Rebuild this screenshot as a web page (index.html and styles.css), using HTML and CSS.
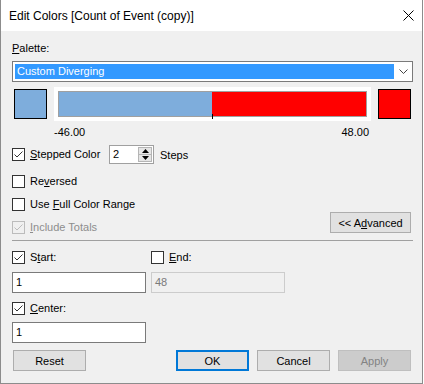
FILE: index.html
```html
<!DOCTYPE html>
<html lang="en">
<head>
	<meta charset="UTF-8">
	<title>Edit Colors</title>
	<link rel="stylesheet" href="styles.css">
</head>
<body>
<div class="window">
	<div class="titlebar">
		<span class="title">Edit Colors [Count of Event (copy)]</span>
		<svg class="close" width="11" height="11" viewBox="0 0 11 11"><path d="M0.5 0.5 L10.5 10.5 M10.5 0.5 L0.5 10.5" stroke="#000" stroke-width="1" fill="none"/></svg>
	</div>
	<div class="content">
		<div class="field-label"><u>P</u>alette:</div>
		<div class="select">
			<span class="select-value">Custom Diverging</span>
			<svg class="chevron" width="9" height="5" viewBox="0 0 9 5"><path d="M0.5 0.5 L4.5 4.5 L8.5 0.5" stroke="#444" stroke-width="1" fill="none"/></svg>
		</div>

		<div class="ramp-row">
			<div class="swatch swatch-blue"></div>
			<div class="ramp-frame">
				<div class="ramp">
					<div class="ramp-left"></div>
					<div class="ramp-right"></div>
					<span class="tick"></span>
				</div>
			</div>
			<div class="swatch swatch-red"></div>
		</div>
		<div class="range-labels"><span>-46.00</span><span>48.00</span></div>

		<div class="stepped-row">
			<label class="check check-wide">
				<span class="box"><svg width="11" height="11" viewBox="0 0 11 11"><path d="M1.5 5.5 L4 8 L9.5 2.5" stroke="#333" fill="none"/></svg></span>
				<span><u>S</u>tepped Color</span>
			</label>
			<div class="spinner">
				<span class="spinner-value">2</span>
				<div class="spin">
					<span class="spin-btn"><svg width="7" height="4" viewBox="0 0 7 4"><path d="M3.5 0 L7 4 L0 4 Z" fill="#000"/></svg></span>
					<span class="spin-btn"><svg width="7" height="4" viewBox="0 0 7 4"><path d="M0 0 L7 0 L3.5 4 Z" fill="#000"/></svg></span>
				</div>
			</div>
			<span class="steps">Steps</span>
		</div>

		<label class="check row-reversed">
			<span class="box"></span>
			<span>Re<u>v</u>ersed</span>
		</label>
		<label class="check row-full">
			<span class="box"></span>
			<span>Use <u>F</u>ull Color Range</span>
		</label>
		<div class="include-row">
			<label class="check disabled">
				<span class="box"><svg width="11" height="11" viewBox="0 0 11 11"><path d="M1.5 5.5 L4 8 L9.5 2.5" stroke="#bcbcbc" fill="none"/></svg></span>
				<span><u>I</u>nclude Totals</span>
			</label>
			<button class="btn btn-advanced">&lt;&lt; A<u>d</u>vanced</button>
		</div>

		<div class="separator"></div>

		<div class="pair row-startend">
			<label class="check">
				<span class="box"><svg width="11" height="11" viewBox="0 0 11 11"><path d="M1.5 5.5 L4 8 L9.5 2.5" stroke="#333" fill="none"/></svg></span>
				<span>S<u>t</u>art:</span>
			</label>
			<label class="check">
				<span class="box"></span>
				<span><u>E</u>nd:</span>
			</label>
		</div>
		<div class="pair row-inputs">
			<div class="input">1</div>
			<div class="input input-disabled">48</div>
		</div>

		<label class="check row-center">
			<span class="box"><svg width="11" height="11" viewBox="0 0 11 11"><path d="M1.5 5.5 L4 8 L9.5 2.5" stroke="#333" fill="none"/></svg></span>
			<span><u>C</u>enter:</span>
		</label>
		<div class="pair row-center-input">
			<div class="input">1</div>
		</div>

		<div class="buttons">
			<button class="btn btn-reset">Reset</button>
			<span class="spacer"></span>
			<button class="btn btn-default">OK</button>
			<button class="btn">Cancel</button>
			<button class="btn" disabled>Apply</button>
		</div>
	</div>
</div>
</body>
</html>
```

FILE: styles.css
```css
body {
	margin: 0;
	background: #fff;
	font-family: "Liberation Sans", Arial, sans-serif;
	font-size: 11px;
	color: #000;
}
u {
	text-decoration: underline;
	text-underline-offset: 1px;
}
.window {
	width: 423px;
	height: 384px;
	box-sizing: border-box;
	border: 1px solid #8c8c8c;
	border-top: 0;
	background: #f0f0f0;
	display: flex;
	flex-direction: column;
}
.titlebar {
	height: 31px;
	flex: none;
	background: #fff;
	display: flex;
	align-items: center;
	justify-content: space-between;
	padding: 0 8px;
}
.title {
	font-size: 12px;
	margin-top: 1px;
}
.close {
	display: block;
}
.content {
	flex: 1;
	padding: 9px 9px 0 11px;
	display: flex;
	flex-direction: column;
}
.field-label {
	height: 16px;
	line-height: 16px;
}

/* palette select */
.select {
	margin-top: 5px;
	height: 21px;
	box-sizing: border-box;
	border: 1px solid #7a7a7a;
	background: #fff;
	padding: 2px;
	display: flex;
	align-items: center;
}
.select-value {
	flex: 0 0 379px;
	height: 15px;
	line-height: 15px;
	padding-left: 2px;
	box-sizing: border-box;
	background: #3399ff;
	color: #fff;
}
.chevron {
	display: block;
	margin-left: 5px;
}

/* color ramp */
.ramp-row {
	margin-top: 5px;
	height: 34px;
	display: flex;
	align-items: center;
	gap: 7px;
	padding: 0 2px;
}
.swatch {
	width: 33px;
	height: 30px;
	box-sizing: border-box;
	border: 1px solid #000;
}
.swatch-blue {
	background: #7eaddc;
}
.swatch-red {
	background: #ff0000;
}
.ramp-frame {
	width: 317px;
	height: 34px;
	box-sizing: border-box;
	padding: 4px;
	background: #fff;
}
.ramp {
	position: relative;
	height: 26px;
	box-sizing: border-box;
	border: 1px solid #a0a0a0;
	display: flex;
}
.ramp-left {
	width: 153px;
	background: #7eaddc;
}
.ramp-right {
	flex: 1;
	background: #ff0000;
}
.tick {
	position: absolute;
	left: 153px;
	bottom: -3px;
	width: 1px;
	height: 5px;
	background: #000;
}
.range-labels {
	margin: 3px 0 0 42px;
	width: 315px;
	height: 16px;
	line-height: 16px;
	display: flex;
	justify-content: space-between;
}

/* checkboxes */
.check {
	display: flex;
	align-items: center;
	gap: 5px;
	height: 13px;
	line-height: 13px;
}
.box {
	width: 13px;
	height: 13px;
	box-sizing: border-box;
	border: 1px solid #333;
	background: #fff;
	flex: none;
}
.box svg {
	display: block;
}
.check.disabled {
	color: #8d8d8d;
}
.check.disabled .box {
	border-color: #bcbcbc;
	background: #f0f0f0;
}

.stepped-row {
	margin-top: 5px;
	height: 19px;
	display: flex;
	align-items: center;
}
.check-wide {
	width: 97px;
}
.spinner {
	width: 45px;
	height: 19px;
	box-sizing: border-box;
	border: 1px solid #a0a0a0;
	background: #fff;
	display: flex;
	justify-content: space-between;
}
.spinner-value {
	padding-left: 3px;
	line-height: 17px;
}
.spin {
	width: 14px;
	display: flex;
	flex-direction: column;
	padding: 1px 1px 1px 0;
}
.spin-btn {
	flex: 1;
	background: #e5e5e5;
	border: 1px solid #b5b5b5;
	display: flex;
	align-items: center;
	justify-content: center;
}
.spin-btn + .spin-btn {
	border-top: 0;
}
.spin-btn svg {
	display: block;
}
.steps {
	margin-left: 6px;
}

.row-reversed {
	margin-top: 11px;
}
.row-full {
	margin-top: 10px;
}
.include-row {
	margin-top: 1px;
	display: flex;
	align-items: flex-end;
	justify-content: space-between;
}

/* buttons */
.btn {
	width: 73px;
	height: 21px;
	box-sizing: border-box;
	padding: 0;
	border: 1px solid #adadad;
	background: #e1e1e1;
	font: inherit;
	color: #000;
}
.btn-advanced {
	width: 81px;
	margin: 0 2px 1px 0;
}
.btn-default {
	border: 2px solid #0078d7;
}
.btn:disabled {
	background: #cccccc;
	border-color: #bfbfbf;
	color: #838383;
}

.separator {
	margin-top: 6px;
	height: 1px;
	background: #a0a0a0;
}

.pair {
	display: grid;
	grid-template-columns: 134px 134px;
	column-gap: 5px;
}
.row-startend {
	margin-top: 10px;
}
.row-inputs {
	margin-top: 8px;
}
.input {
	height: 21px;
	box-sizing: border-box;
	border: 1px solid #7a7a7a;
	background: #fff;
	padding-left: 3px;
	line-height: 19px;
}
.input-disabled {
	border-color: #cccccc;
	background: #f0f0f0;
	color: #7a7a7a;
}
.row-center {
	margin-top: 9px;
}
.row-center-input {
	margin-top: 7px;
}

.buttons {
	margin-top: 7px;
	display: flex;
	gap: 8px;
	padding: 0 2px 0 1px;
}
.spacer {
	flex: 1;
}
```
